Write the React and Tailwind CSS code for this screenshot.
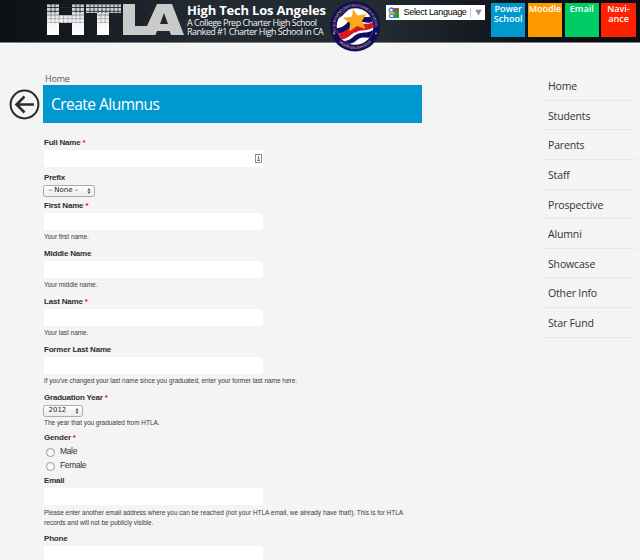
import React from "react";

const LINKS = ["Home", "Students", "Parents", "Staff", "Prospective", "Alumni", "Showcase", "Other Info", "Star Fund"];

const TILES = [
  { lines: ["Power", "School"], color: "bg-[#0099cf]" },
  { lines: ["Moodle"], color: "bg-[#ff9900]" },
  { lines: ["Email"], color: "bg-[#00cc66]" },
  { lines: ["Navi-", "ance"], color: "bg-[#ff2200]" },
];

function Logo() {
  return (
    <svg className="ml-[46px] mt-1 h-8 w-[138px] shrink-0" viewBox="0 0 138 32">
      <defs>
        <linearGradient id="letters" x1="0" y1="0" x2="0" y2="1">
          <stop offset="0" stopColor="#c4c6c9" />
          <stop offset="0.55" stopColor="#f4f4f4" />
          <stop offset="1" stopColor="#fff" />
        </linearGradient>
      </defs>
      <path d="M1 0H13V11H26V0H38V31H26V19H13V31H1Z" fill="url(#letters)" />
      <path d="M40 0H75V9H63V31H51V9H40Z" fill="url(#letters)" />
      <g stroke="#22282f">
        <path d="M1 3.500H75M1 7.300H75" strokeWidth=".9" />
        <path d="M1 .5H75M1 11H75" strokeWidth=".6" opacity=".7" />
        <path d="M1 14.700H75M1 18.500H75" strokeWidth=".5" opacity=".5" />
        <path d="M5 0V9M9 0V9M30 0V9M34 0V9M44 0V9M48 0V9M52 0V9M56 0V9M60 0V9M64 0V9M68 0V9M72 0V9" strokeWidth=".8" />
        <path d="M5 9V19M9 9V19M13 11V19M17.500 11V19M22 11V19M26 11V19M30 9V19M34 9V19M55 9V19M59 9V19" strokeWidth=".5" opacity=".55" />
      </g>
      <path
        fillRule="evenodd"
        d="M77 0H89V22H101L111 0H126L138 31H125L123.500 27H111L109.500 31H77ZM118 9L114 20H122Z"
        fill="#cacaca"
      />
    </svg>
  );
}

function Seal() {
  return (
    <svg className="-mt-[1px] ml-[2px] h-[54px] w-[54px] shrink-0" viewBox="0 0 54 54">
      <defs>
        <clipPath id="disc"><circle cx="27" cy="27.500" r="18.300" /></clipPath>
        <path id="top-arc" d="M8.300 34A19.800 19.800 0 1 1 45.700 34" />
        <path id="low-arc" d="M9 41A22.500 22.500 0 0 0 45 41" />
      </defs>
      <circle cx="27" cy="27.500" r="25" fill="#120c5c" />
      <g clipPath="url(#disc)">
        <rect width="54" height="54" fill="#fff" />
        <path d="M5 19C15 22 16 10 26 9C36 8 42 13 48 7V0H5Z" fill="#120c5c" />
        <path d="M8 29C19 29 18 21 27 18C35 15 39 22 47 14V21C39 27 36 21 29 24C20 28 20 34 8 35Z" fill="#120c5c" />
        <path d="M8 35C16 35 20 29 27 26V33C20 38 18 41 8 41Z" fill="#dc1522" />
        <path d="M27 27C35 21 39 29 47 21V27C39 34 34 29 27 34Z" fill="#dc1522" />
        <path d="M13 42C25 43 24 35 33 34C38 33 42 34 47 29V37C39 41 35 36 29 41C25 45 20 46 13 45Z" fill="#120c5c" />
      </g>
      <path d="M25 10L29.500 16.500L38.500 15L34 22L37.500 30L29 27L21.500 32.500L22 24L15 19L24 17.500Z" fill="#faa91d" />
      <g className="font-['Liberation_Serif',serif] text-[4px] font-bold" fill="#a98873">
        <text><textPath href="#top-arc" textLength="70">A CALIFORNIA DISTINGUISHED SCHOOL</textPath></text>
        <text><textPath href="#low-arc" startOffset="3" textLength="36">HIGH TECH LOS ANGELES</textPath></text>
      </g>
      <circle cx="6" cy="34.500" r=".9" fill="#dda53b" />
      <circle cx="48" cy="34.500" r=".9" fill="#dda53b" />
    </svg>
  );
}

function Language() {
  return (
    <div className="ml-[4px] mt-[5px] flex h-[15px] w-[99px] shrink-0 items-center bg-white font-['Liberation_Sans',sans-serif]">
      <svg className="ml-[2px] h-3 w-3 shrink-0" viewBox="0 0 12 12">
        <path d="M5 1H11V11H5Z" fill="#289a42" />
        <path d="M6 1H10.500V4H7Z" fill="#d5362b" />
        <circle cx="3.200" cy="3" r="2" fill="#fff" stroke="#3a75dc" strokeWidth="1.300" />
        <path d="M0 5.500L5 4.500L7 7L4 8.500L1 7.500Z" fill="#f2bd28" />
        <ellipse cx="3.700" cy="9" rx="2.500" ry="1.600" fill="#fff" stroke="#3a75dc" strokeWidth="1.100" />
      </svg>
      <span className="ml-[3.500px] w-[64px] shrink-0 whitespace-nowrap text-[9px] leading-[15px] tracking-[-0.300px] text-black">Select Language</span>
      <span className="ml-[2.500px] h-[10px] w-px bg-[#c9c9c9]" />
      <svg className="ml-[4px] h-[7px] w-[7px]" viewBox="0 0 7 7"><path d="M.3 .7H6.700L3.500 6.500Z" fill="#8b8b8b" /></svg>
    </div>
  );
}

function Header() {
  return (
    <header className="flex h-[43px] items-start border-b border-[#777b80] bg-[linear-gradient(90deg,#0d1014_0%,#222a32_30%,#222a32_60%,#0c0f13_85%,#0b0d10_100%)]">
      <Logo />
      <div className="ml-[3px] w-[139px] shrink-0 whitespace-nowrap font-['Open_Sans',sans-serif] text-[#f4f4f4]">
        <div className="mt-[2px] text-[13px] font-bold leading-[16px] tracking-[-0.200px] text-white">High Tech Los Angeles</div>
        <div className="text-[9px] leading-[9px]">
          <div className="tracking-[-0.500px]">A College Prep Charter High School</div>
          <div className="tracking-[-0.520px]">Ranked #1 Charter High School in CA</div>
        </div>
      </div>
      <Seal />
      <Language />
      <nav className="ml-[6px] mt-[2.500px] flex gap-[2.500px]">
        {TILES.map((tile) => (
          <a key={tile.lines[0]} className={"h-[34.500px] w-[34.300px] pt-[1.500px] text-center font-['Open_Sans',sans-serif] text-[9px] font-semibold leading-[10px] text-white " + tile.color}>
            {tile.lines.map((line) => <div key={line} className="whitespace-nowrap">{line}</div>)}
          </a>
        ))}
      </nav>
    </header>
  );
}

function Label({ children, required }) {
  return (
    <div className="h-[14.500px] whitespace-nowrap pl-px text-[8px] font-bold leading-[15px] tracking-[-0.200px] text-[#303030]">
      {children}
      {required && <span className="text-[#f00]"> *</span>}
    </div>
  );
}

function Input({ children }) {
  return <div className="ml-[0.500px] flex h-[17.500px] w-[219.500px] items-center justify-end rounded-[2px] bg-white">{children}</div>;
}

function Hint({ children }) {
  return <div className="h-[14px] whitespace-nowrap pl-px text-[6.500px] leading-[14.500px] tracking-[-0.030px] text-[#3b3b3b]">{children}</div>;
}

function Field({ label, required, hint }) {
  return (
    <div className="h-12">
      <Label required={required}>{label}</Label>
      <Input />
      <Hint>{hint}</Hint>
    </div>
  );
}

function Picker({ value, className }) {
  return (
    <div className={"-ml-[0.500px] flex h-[12px] items-center justify-between rounded-[2.500px] border border-[#ababab] bg-linear-to-b from-white to-[#ececec] pl-[5px] pr-[3px] font-['DejaVu_Sans',sans-serif] text-[7px] leading-[9px] text-[#222] " + className}>
      <span className="whitespace-nowrap">{value}</span>
      <svg className="h-[6px] w-[4px]" viewBox="0 0 4 6"><path d="M2 0L3.600 2.400H.4ZM2 6L3.600 3.600H.4Z" fill="#555" /></svg>
    </div>
  );
}

function Radio({ children }) {
  return (
    <div className="flex h-[14px] items-center pl-[3px]">
      <span className="mt-[2px] h-[9px] w-[9px] rounded-full border border-[#999] bg-linear-to-b from-[#f3f3f3] to-white" />
      <span className="-mt-px ml-[5px] text-[8.500px] leading-[14px] tracking-[-0.350px] text-[#333]">{children}</span>
    </div>
  );
}

function Form() {
  return (
    <form className="mt-[12px] w-[379px] font-['Liberation_Sans',sans-serif]">
      <div className="h-[35px]">
        <Label required>Full Name</Label>
        <Input>
          <svg className="mr-[1px] h-[9px] w-[7px]" viewBox="0 0 7 9">
            <rect x=".5" y=".5" width="6" height="8" fill="#fff" stroke="#8b8b8b" />
            <path d="M3.500 2V5M2 6.500H5M2.400 5H4.600" stroke="#777" />
          </svg>
        </Input>
      </div>
      <div className="h-[28px]">
        <Label>Prefix</Label>
        <Picker value="– None –" className="w-[52px]" />
      </div>
      <Field label="First Name" required hint="Your first name." />
      <Field label="Middle Name" hint="Your middle name." />
      <Field label="Last Name" required hint="Your last name." />
      <Field label="Former Last Name" hint="If you've changed your last name since you graduated, enter your former last name here." />
      <div className="h-[40px]">
        <Label required>Graduation Year</Label>
        <Picker value="2012" className="w-[40px]" />
        <div className="-mt-[1px]">
          <Hint>The year that you graduated from HTLA.</Hint>
        </div>
      </div>
      <div className="h-[43px]">
        <Label required>Gender</Label>
        <Radio>Male</Radio>
        <Radio>Female</Radio>
      </div>
      <div className="h-[58px]">
        <Label>Email</Label>
        <Input />
        <div className="whitespace-nowrap pl-px pt-[3px] text-[6.500px] leading-[10px] tracking-[-0.020px] text-[#3b3b3b]">
          Please enter another email address where you can be reached (not your HTLA email, we already have that!). This is for HTLA
          <br />
          records and will not be publicly visible.
        </div>
      </div>
      <Label>Phone</Label>
      <Input />
    </form>
  );
}

export default function App() {
  return (
    <div className="h-[560px] w-[640px] overflow-hidden bg-[#f4f4f4]">
      <Header />
      <div className="flex items-start border-t border-white">
        <svg className="ml-[9px] mt-[45px] h-[31px] w-[31px] shrink-0" viewBox="0 0 31 31" fill="none" stroke="#2b2b2b">
          <circle cx="15.500" cy="15.500" r="13.900" strokeWidth="2" />
          <path d="M25 15.500H7M15.500 7.500L7.500 15.500L15.500 23.500" strokeWidth="2.500" />
        </svg>
        <main className="ml-[3px] w-[379px] shrink-0 pt-[28px] font-['Open_Sans',sans-serif]">
          <div className="h-[13px] pl-[2px] text-[9px] leading-[13px] tracking-[-0.200px] text-[#555]">Home</div>
          <h1 className="h-[38px] bg-[#0099cf] pl-[8px] text-[15.500px] font-normal leading-[38px] tracking-[-0.520px] text-white">Create Alumnus</h1>
          <Form />
        </main>
        <nav className="ml-[120px] mt-[27px] w-[94px] font-['Open_Sans',sans-serif]">
          {LINKS.map((link) => (
            <a key={link} className="block h-[29.650px] border-b border-[#e9e9e9] pl-[6px] text-[10.500px] leading-[31px] tracking-[-0.150px] text-[#333]">{link}</a>
          ))}
        </nav>
      </div>
    </div>
  );
}
